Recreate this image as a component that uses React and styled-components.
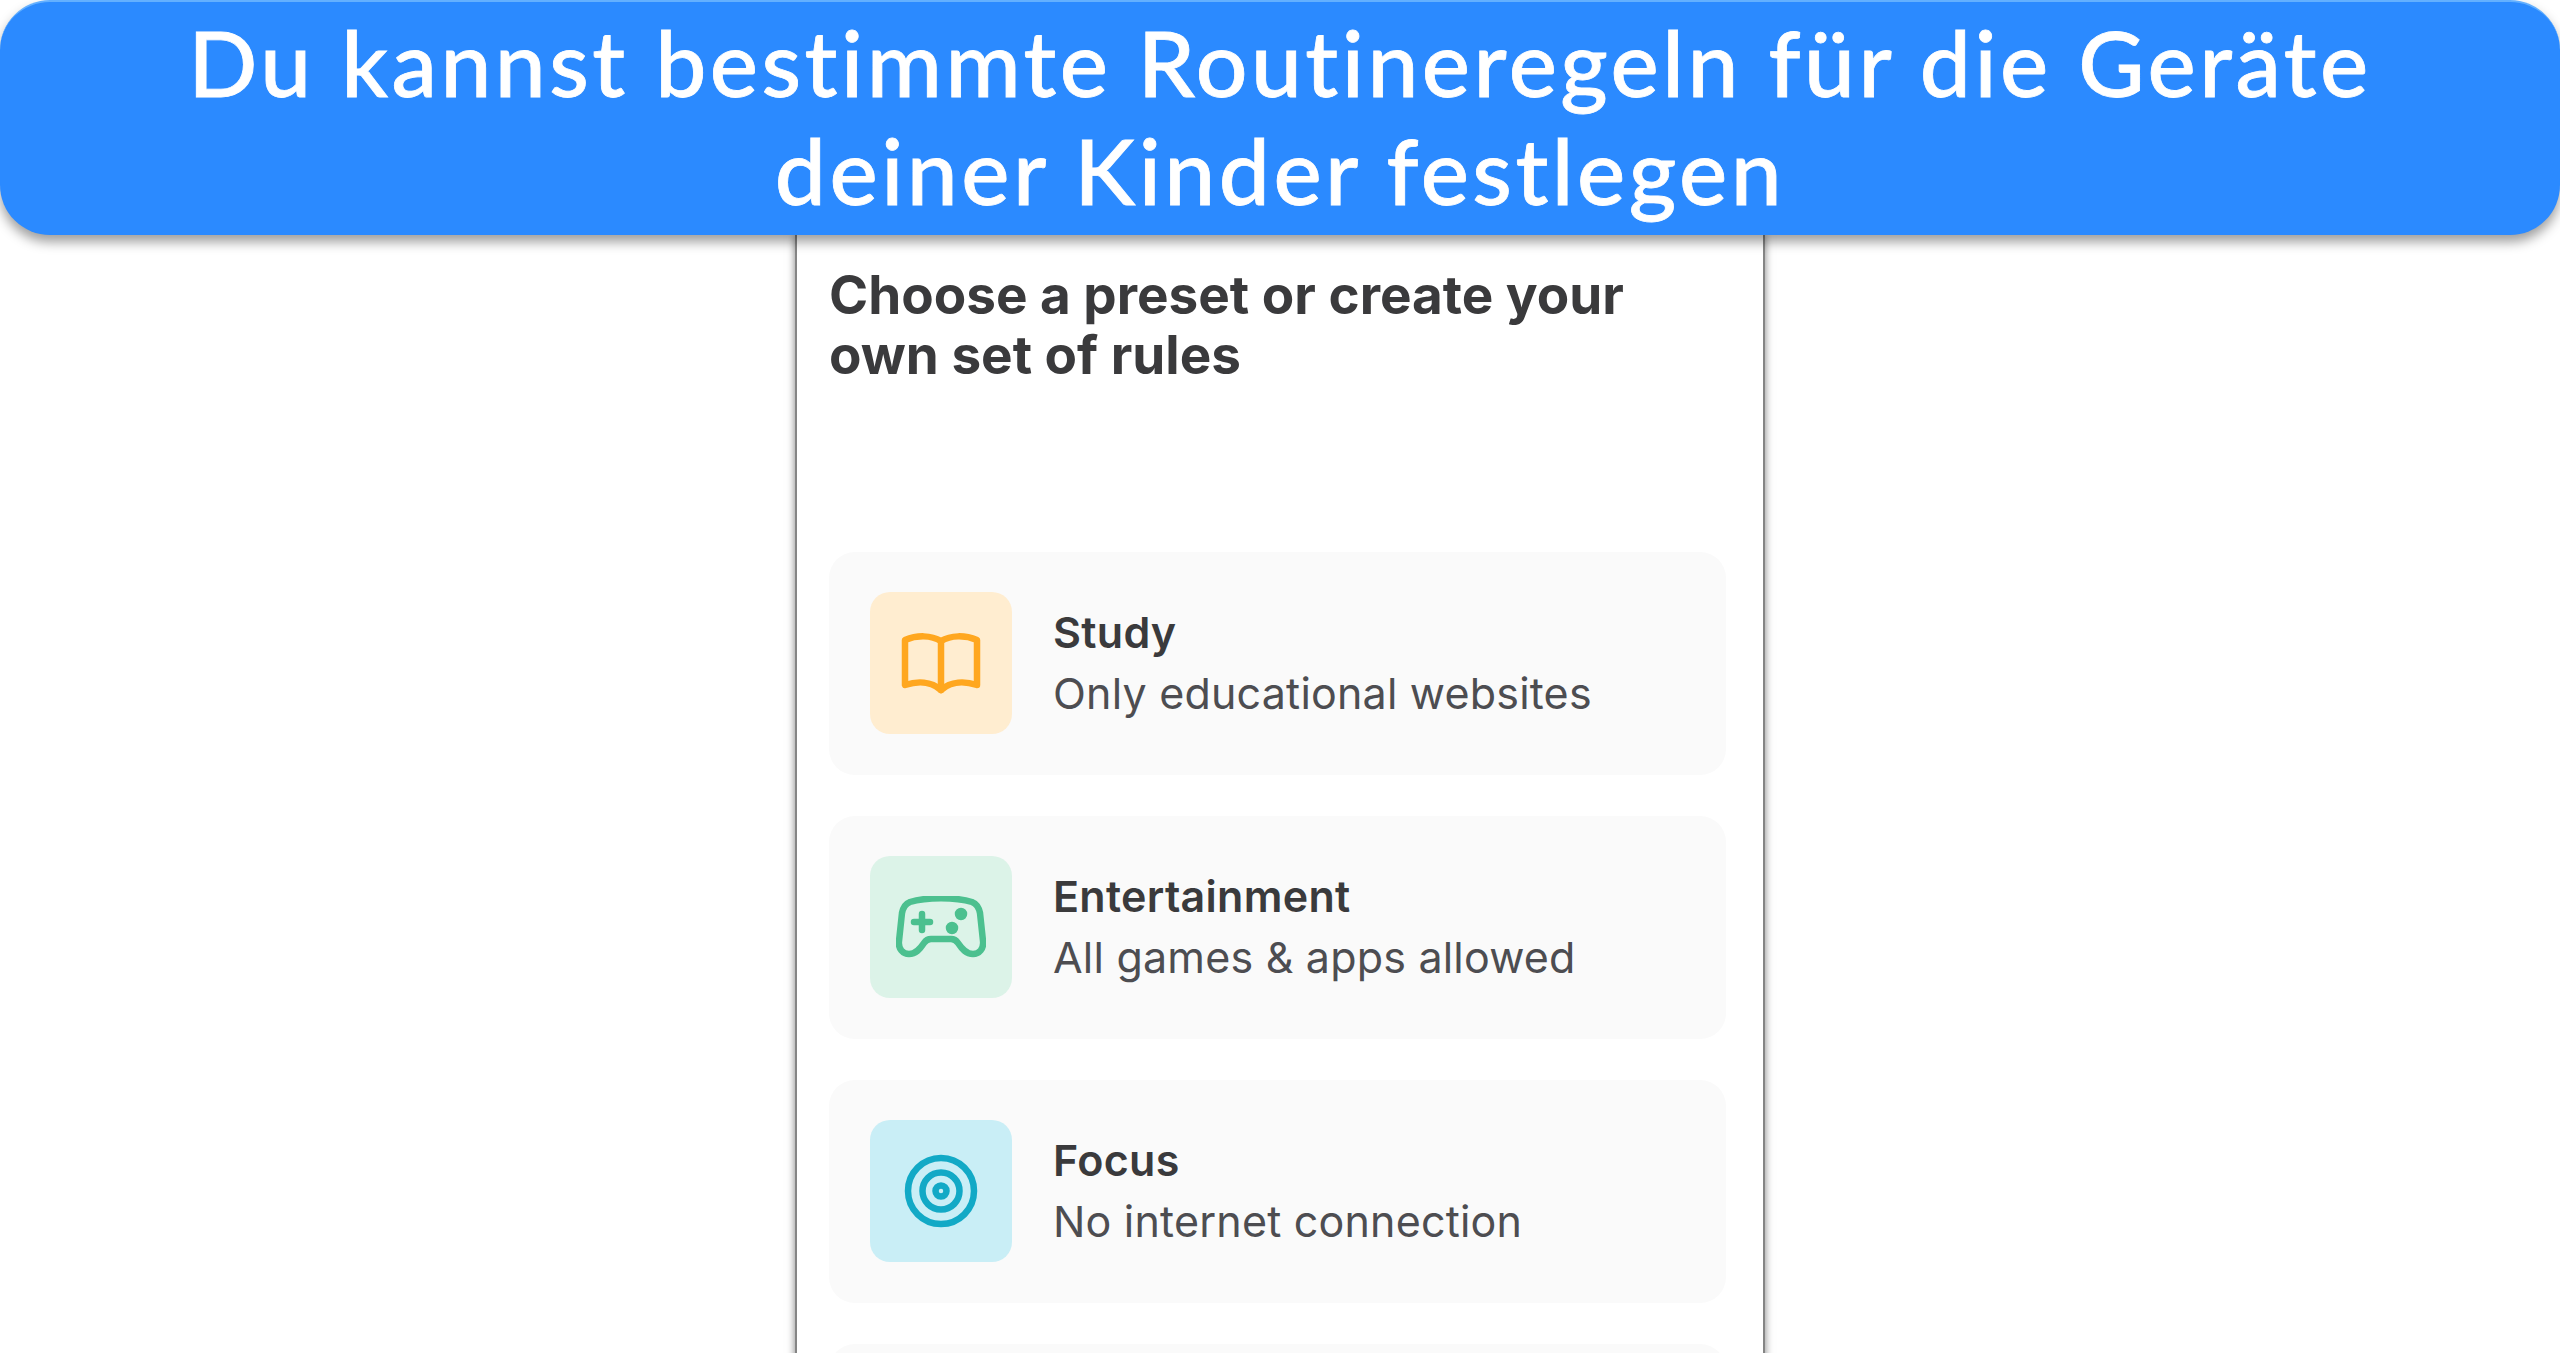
import React from 'react';
import styled, { createGlobalStyle } from 'styled-components';

const GlobalStyle = createGlobalStyle`
  html, body {
    margin: 0;
    padding: 0;
    background: #ffffff;
  }
`;

const Page = styled.div`
  width: 2560px;
  height: 1353px;
  overflow: hidden;
  display: flex;
  flex-direction: column;
  align-items: center;
  background: #ffffff;
`;

const Banner = styled.header`
  position: relative;
  z-index: 2;
  flex: none;
  box-sizing: border-box;
  width: 100%;
  height: 235px;
  padding-top: 6px;
  border-top: 2px solid #63b0ff;
  border-radius: 50px;
  background: #2b8aff;
  box-shadow: 0 7px 12px rgba(0, 0, 0, 0.38);
  color: #ffffff;
  font-family: 'Lato', sans-serif;
  font-size: 91px;
  font-weight: 500;
  line-height: 108px;
  letter-spacing: 3.5px;
  text-align: center;
  -webkit-text-stroke: 0.8px #ffffff;
`;

const Phone = styled.main`
  flex: none;
  box-sizing: border-box;
  width: 970px;
  height: 1200px;
  padding: 30px 37px 0 32px;
  border-left: 2px solid #858585;
  border-right: 2px solid #858585;
  box-shadow: 0 0 8px rgba(0, 0, 0, 0.5);
  background: #ffffff;
`;

const Heading = styled.h1`
  margin: 0 0 167px;
  width: 880px;
  color: #3a3a3c;
  font-family: 'Inter', sans-serif;
  font-size: 53px;
  font-weight: 700;
  line-height: 60px;
`;

const CardList = styled.div`
  display: flex;
  flex-direction: column;
  gap: 41px;
`;

const Card = styled.div`
  display: flex;
  flex: none;
  align-items: center;
  gap: 41px;
  box-sizing: border-box;
  height: 223px;
  padding: 0 40px 2px 41px;
  border-radius: 26px;
  background: #fafafa;
`;

const IconBox = styled.div`
  display: flex;
  flex: none;
  align-items: center;
  justify-content: center;
  width: 142px;
  height: 142px;
  border-radius: 20px;
  background: ${(p) => p.$bg};
  color: ${(p) => p.$color};
`;

const Label = styled.div`
  font-family: 'Inter', sans-serif;
  line-height: 61px;
`;

const CardTitle = styled.div`
  color: #3a3a3c;
  font-size: 43px;
  font-weight: 600;
  letter-spacing: 0.3px;
`;

const CardText = styled.div`
  color: #4d4d51;
  font-size: 43px;
  font-weight: 400;
  letter-spacing: 0.2px;
`;

const BookIcon = () => (
  <svg width="84" height="66" viewBox="0 0 84 66" fill="none" stroke="currentColor" strokeWidth="6.5" strokeLinecap="round" strokeLinejoin="round">
    <path d="M6 10C18 5 32 5 42 11C52 5 66 5 78 10V55C66 51 52 51 42 60C32 51 18 51 6 55Z" />
    <path d="M42 11V60" />
  </svg>
);

const GamepadIcon = () => (
  <svg width="90" height="62" viewBox="0 0 90 62" fill="none" stroke="currentColor" strokeWidth="6.5" strokeLinecap="round" strokeLinejoin="round">
    <path d="M14 6C30 1 60 1 76 6C81 8 83 12 84 17L87 45C88 53 83 58 77 58C70 58 66 53 62 47C60 44 58 43 55 43H35C32 43 30 44 28 47C24 53 20 58 13 58C7 58 2 53 3 45L6 17C7 12 9 8 14 6Z" />
    <path d="M26 18V34M18 26H34" />
    <circle cx="65" cy="18" r="3" fill="currentColor" />
    <circle cx="56" cy="32" r="3" fill="currentColor" />
  </svg>
);

const TargetIcon = () => (
  <svg width="74" height="74" viewBox="0 0 74 74" fill="none" stroke="currentColor" strokeWidth="6.5">
    <circle cx="37" cy="37" r="33" />
    <circle cx="37" cy="37" r="18.5" />
    <circle cx="37" cy="37" r="5.5" />
  </svg>
);

const presets = [
  { title: 'Study', text: 'Only educational websites', bg: '#ffedd0', color: '#ffa71f', Icon: BookIcon },
  { title: 'Entertainment', text: 'All games & apps allowed', bg: '#dcf3e8', color: '#4cc08f', Icon: GamepadIcon },
  { title: 'Focus', text: 'No internet connection', bg: '#c9eef6', color: '#12a9c6', Icon: TargetIcon },
];

const App = () => {
  return (
    <Page>
      <GlobalStyle />
      <Banner>
        Du kannst bestimmte Routineregeln für die Geräte
        <br />
        deiner Kinder festlegen
      </Banner>
      <Phone>
        <Heading>Choose a preset or create your own set of rules</Heading>
        <CardList>
          {presets.map(({ title, text, bg, color, Icon }) => (
            <Card key={title}>
              <IconBox $bg={bg} $color={color}>
                <Icon />
              </IconBox>
              <Label>
                <CardTitle>{title}</CardTitle>
                <CardText>{text}</CardText>
              </Label>
            </Card>
          ))}
          <Card />
        </CardList>
      </Phone>
    </Page>
  );
};

export default App;
